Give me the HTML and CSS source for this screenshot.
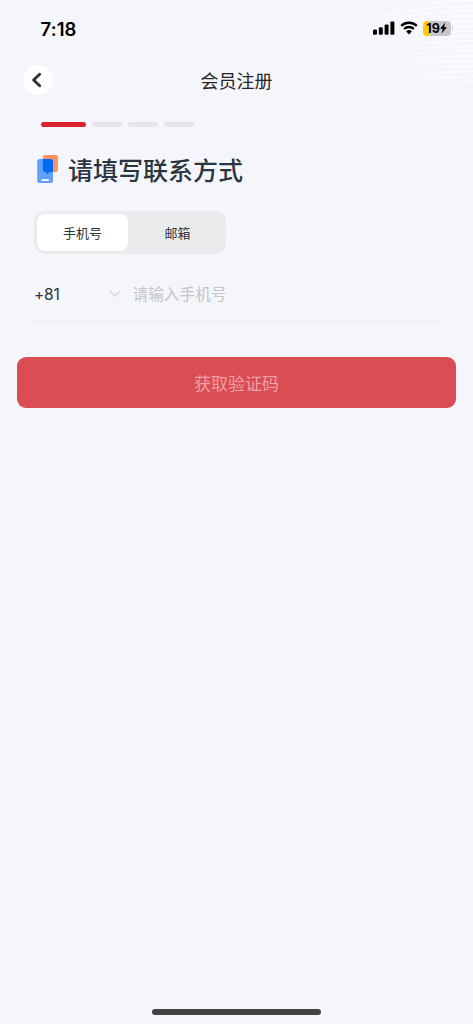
FILE: index.html
```html
<!DOCTYPE html>
<html lang="zh-CN">
<head>
<meta charset="utf-8">
<title>会员注册</title>
<link rel="stylesheet" href="styles.css">
</head>
<body>
<div class="screen">
  <svg class="waves" width="173" height="120" viewBox="0 0 173 120" fill="none" stroke="url(#fade)" stroke-width="2">
    <defs>
      <linearGradient id="fade" gradientUnits="userSpaceOnUse" x1="25" y1="80" x2="170" y2="10">
        <stop offset="0" stop-color="#fff" stop-opacity="0"/>
        <stop offset="1" stop-color="#fff" stop-opacity=".6"/>
      </linearGradient>
    </defs>
    <path d="M0 52C50 18 105 0 173 1"/>
    <path d="M0 54C50 22 105 5 173 6"/>
    <path d="M0 56C50 26 105 10 173 11"/>
    <path d="M0 58C50 30 105 15 173 16"/>
    <path d="M0 60C50 34 105 20 173 21"/>
    <path d="M0 62C50 38 105 25 173 26"/>
    <path d="M0 64C50 42 105 31 173 31"/>
    <path d="M0 66C50 46 105 36 173 36"/>
    <path d="M0 68C50 50 105 41 173 41"/>
    <path d="M0 70C50 54 105 47 173 46"/>
    <path d="M0 72C50 58 105 52 173 51"/>
    <path d="M0 74C50 62 105 57 173 56"/>
    <path d="M0 76C50 66 105 62 173 61"/>
    <path d="M20 78C60 71 115 68 173 66"/>
    <path d="M40 80C75 75 125 73 173 71"/>
    <path d="M60 83C90 80 135 78 173 76"/>
    <path d="M80 87C105 84 140 83 173 81"/>
  </svg>

  <header class="status">
    <span class="time">7:18</span>
    <div class="indicators">
      <svg class="signal" width="22" height="14" viewBox="0 0 22 14">
        <rect x="0" y="8.6" width="4" height="5.2" rx="1.2"/>
        <rect x="5.8" y="6.2" width="4" height="7.6" rx="1.2"/>
        <rect x="11.6" y="3.4" width="4" height="10.4" rx="1.2"/>
        <rect x="17.4" y="0.4" width="4" height="13.4" rx="1.2"/>
      </svg>
      <svg class="wifi" width="18" height="14" viewBox="0 0 18 14">
        <path d="M1.200 4.900a11.200 11.200 0 0 1 15.600 0M4.100 8a7 7 0 0 1 9.800 0" fill="none" stroke="#000" stroke-width="2.300"/>
        <path d="M6.200 10.400a4 4 0 0 1 5.600 0L9 13.400z"/>
      </svg>
      <div class="battery">
        <span>19</span>
        <svg width="7" height="12" viewBox="0 0 7 12"><path d="M5.200.6 0 6.700h2.800L1.600 11.400 7 5.200H4.100z"/></svg>
      </div>
      <i class="battery-tip"></i>
    </div>
  </header>

  <nav class="navbar">
    <button class="back" aria-label="返回">
      <svg width="30" height="30" viewBox="0 0 30 30"><path d="M16.700 9.200 10.600 15l6.100 5.800" fill="none" stroke="#333" stroke-width="2.900" stroke-linecap="round" stroke-linejoin="round"/></svg>
    </button>
    <h1 class="title">会员注册</h1>
    <span></span>
  </nav>

  <div class="steps"><i class="step active"></i><i class="step"></i><i class="step"></i><i class="step"></i></div>

  <div class="heading">
    <svg width="22" height="28" viewBox="0 0 22 28">
      <rect x="5.800" y="0" width="15.200" height="17" rx="2" fill="#ff945f"/>
      <rect x="0.200" y="4" width="15.800" height="24" rx="2.600" fill="#619fff"/>
      <path d="M5.800 4h7.600A2.600 2.600 0 0 1 16 6.600V17h-3.300L9.600 19.600V17H7.800a2 2 0 0 1-2-2z" fill="#006af2"/>
      <rect x="4.300" y="24.200" width="7.600" height="1.700" rx=".4" fill="#fff"/>
    </svg>
    <h2>请填写联系方式</h2>
  </div>

  <div class="tabs">
    <button class="tab selected">手机号</button>
    <button class="tab second">邮箱</button>
  </div>

  <div class="field">
    <span class="code">+81</span>
    <svg width="12" height="8" viewBox="0 0 12 8"><path d="M1.700 2 6 6l4.300-4" fill="none" stroke="#dcdcde" stroke-width="2" stroke-linecap="round" stroke-linejoin="round"/></svg>
    <span class="placeholder">请输入手机号</span>
  </div>

  <button class="submit">获取验证码</button>
  <div class="home"></div>
</div>
</body>
</html>
```

FILE: styles.css
```css
* { box-sizing: border-box; }
body { margin: 0; }
button { border: 0; padding: 0; font: inherit; color: inherit; }
h1, h2 { margin: 0; }
svg { display: block; flex: none; }

.screen {
  position: relative;
  display: flex;
  flex-direction: column;
  width: 473px;
  height: 1024px;
  overflow: hidden;
  background: #f4f6fb;
  color: #2b3540;
  font-family: "Inter", "Noto Sans CJK SC", sans-serif;
}
.waves { position: absolute; top: 0; right: 0; }

.status {
  position: relative;
  display: flex;
  justify-content: space-between;
  align-items: center;
  height: 56px;
  padding: 0 20px 0 40.500px;
  color: #000;
}
.time { padding-top: 2px; font-size: 18.500px; font-weight: 600; line-height: 22px; letter-spacing: 0.1px; }
.indicators { display: flex; align-items: center; }
.wifi { margin-left: 5px; }
.battery {
  display: flex;
  align-items: center;
  justify-content: center;
  width: 28px;
  height: 15px;
  margin-left: 5px;
  border-radius: 4px;
  background: linear-gradient(90deg, #fc0 5.500px, #c7c8ca 5.500px);
  font-size: 12.500px;
  font-weight: 700;
  line-height: 15px;
  letter-spacing: -0.1px;
}
.battery-tip { width: 1.500px; height: 4px; margin-left: 1px; border-radius: 0 2px 2px 0; background: #c7c8ca; }

.navbar {
  position: relative;
  display: grid;
  grid-template-columns: 1fr auto 1fr;
  align-items: center;
  height: 48px;
  padding: 0 23px;
}
.back { width: 30px; height: 30px; border-radius: 50%; background: #fff; }
.title { padding-top: 3px; color: #262626; font-size: 18px; font-weight: 400; line-height: 26px; }

.steps { display: flex; gap: 6px; padding: 18px 0 0 40.500px; }
.step { width: 30px; height: 5px; border-radius: 3px; background: #e5e6e7; }
.step.active { width: 45.500px; background: #d9232e; }

.heading { display: flex; align-items: center; gap: 9px; margin: 24px 0 0 37px; height: 36px; }
.heading h2 { padding-top: 3px; font-size: 25px; font-weight: 500; line-height: 36px; }

.tabs {
  display: flex;
  width: 192px;
  height: 43px;
  margin: 24px 0 0 34px;
  padding: 3px;
  border-radius: 10px;
  background: #e9ebed;
}
.tab { flex: 1; border-radius: 8px; background: none; font-size: 13px; line-height: 20px; }
.tab.selected { flex: 0 0 91px; background: #fff; }
.tab.second { padding-left: 4px; }

.field {
  display: flex;
  align-items: center;
  height: 55px;
  margin: 13px 35px 0 34px;
  border-bottom: 1.500px solid #e9ebed;
}
.code { width: 75px; font-size: 15.500px; letter-spacing: -0.2px; }
.placeholder { margin: 0 0 2px 11.500px; color: #c4c5c7; font-size: 15.700px; }

.submit {
  height: 51px;
  margin: 35px 17px 0;
  padding-bottom: 1px;
  border-radius: 9px;
  background: #d94d53;
  color: #efa0a8;
  font-size: 17px;
}
.home { width: 169px; height: 6px; margin: auto auto 9px; border-radius: 3px; background: #434444; }
```
